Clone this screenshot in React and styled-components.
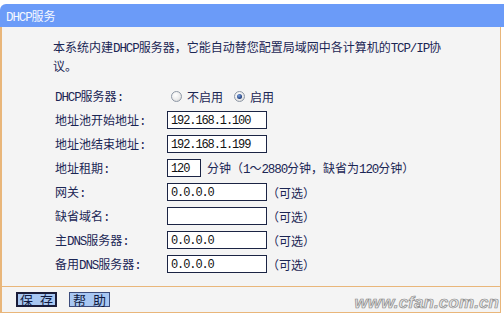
import React from "react";
import styled, { createGlobalStyle, css } from "styled-components";

const Global = createGlobalStyle`
  html, body { margin: 0; padding: 0; background: #ffffff; }
  body { font-family: "Noto Sans CJK SC", "Noto Sans", sans-serif; }
`;

const BORDER = "#e9b67a";
const TEXT = "#1b2654";
const CJK = `"Noto Sans CJK SC", "Noto Sans", sans-serif`;

const Page = styled.div`
  width: 504px;
  height: 314px;
  padding-top: 4px;
  box-sizing: border-box;
  overflow: hidden;
  background: #ffffff;
`;

const Header = styled.div`
  height: 23px;
  line-height: 23px;
  padding-left: 6px;
  background: #6b9bf8;
  border-top-left-radius: 6px;
  color: #f4f7ff;
  font-family: ${CJK};
  font-size: 12px;
`;

/* half-width Latin, as the bitmap Chinese system font draws it */
const Ascii = styled.span`
  font-family: "Liberation Mono", monospace;
  font-size: 12.5px;
  letter-spacing: -1.1px;
  line-height: 1;
`;

const Body = styled.div`
  width: 501px;
  box-sizing: border-box;
  border-left: 2px solid ${BORDER};
  border-right: 1px solid ${BORDER};
  background: #f4f4f4;
  padding: 10px 0 10px 51px;
  color: ${TEXT};
  font-family: ${CJK};
  font-size: 12px;
`;

const Intro = styled.p`
  margin: 0 0 9px 0;
  max-width: 393px;
  line-height: 19px;
`;

const Form = styled.div`
  display: flex;
  flex-direction: column;
  padding-left: 2px;
`;

const Row = styled.div`
  height: 24px;
  display: flex;
  align-items: center;
`;

const Label = styled.div`
  width: 112px;
  flex: none;
  white-space: nowrap;
`;

const Field = styled.input`
  box-sizing: border-box;
  width: ${(p) => p.$w || 100}px;
  height: 18px;
  margin: 0;
  padding: 1px 0 0 3px;
  border: 1px solid #1b2444;
  background: #ffffff;
  color: #111111;
  font-family: "Liberation Mono", monospace;
  font-size: 12px;
  letter-spacing: -1.1px;
  outline: none;
`;

const Note = styled.span`
  margin-left: ${(p) => p.$gap || 0}px;
  white-space: nowrap;
`;

const RadioGroup = styled.div`
  display: flex;
  align-items: center;
  padding-left: 4px;
`;

const RadioItem = styled.label`
  display: flex;
  align-items: center;
  gap: 5px;
  margin-right: 11px;
`;

const RadioDot = styled.span`
  position: relative;
  width: 9px;
  height: 9px;
  border-radius: 50%;
  border: 1px solid #8e98a6;
  background: radial-gradient(circle at 40% 35%, #ffffff 0, #ececec 55%, #c9c9c9 100%);
  ${(p) =>
    p.$checked &&
    css`
      &::after {
        content: "";
        position: absolute;
        left: 2px;
        top: 2px;
        width: 5px;
        height: 5px;
        border-radius: 50%;
        background: radial-gradient(circle at 40% 35%, #7aa2e0 0, #1f3b78 70%);
      }
    `}
`;

const Footer = styled.div`
  width: 501px;
  height: 27px;
  box-sizing: border-box;
  border-left: 2px solid ${BORDER};
  border-right: 1px solid ${BORDER};
  border-top: 1px solid ${BORDER};
  border-bottom: 1px solid ${BORDER};
  background: #f4f4f4;
  display: flex;
  align-items: flex-start;
  padding: 5px 0 0 14px;
  gap: 12px;
`;

const Button = styled.button`
  box-sizing: border-box;
  width: 41px;
  height: 15px;
  margin: 0;
  padding: 0 0 0 2px;
  background: #a8c7f2;
  border: ${(p) => (p.$primary ? "2px solid #1a1c38" : "1px solid #3c4c7c")};
  color: #101a40;
  font-family: ${CJK};
  font-size: 13px;
  line-height: 11px;
  letter-spacing: 2px;
  white-space: pre;
  display: flex;
  align-items: center;
  justify-content: center;
  cursor: pointer;
`;

const Watermark = styled.span`
  margin-left: auto;
  margin-right: 1px;
  font-family: "Liberation Sans", sans-serif;
  font-weight: bold;
  font-style: italic;
  font-size: 17px;
  line-height: 21px;
  color: #e6e6e6;
  -webkit-text-stroke: 0.7px #8a8a8a;
  letter-spacing: 0.1px;
`;

const rows = [
  { label: "地址池开始地址", value: "192.168.1.100" },
  { label: "地址池结束地址", value: "192.168.1.199" },
];

const optional = [
  { label: <>网关</>, key: "gw", value: "0.0.0.0" },
  { label: <>缺省域名</>, key: "dom", value: "" },
  { label: <>主<Ascii>DNS</Ascii>服务器</>, key: "dns1", value: "0.0.0.0" },
  { label: <>备用<Ascii>DNS</Ascii>服务器</>, key: "dns2", value: "0.0.0.0" },
];

export default function App() {
  return (
    <Page>
      <Global />
      <Header>
        <Ascii>DHCP</Ascii>服务
      </Header>
      <Body>
        <Intro>
          本系统内建<Ascii>DHCP</Ascii>服务器，它能自动替您配置局域网中各计算机的<Ascii>TCP/IP</Ascii>
          {"协"}
          {"议。"}
        </Intro>
        <Form>
          <Row>
            <Label>
              <Ascii>DHCP</Ascii>服务器<Ascii>:</Ascii>
            </Label>
            <RadioGroup>
              <RadioItem>
                <RadioDot />
                不启用
              </RadioItem>
              <RadioItem>
                <RadioDot $checked />
                启用
              </RadioItem>
            </RadioGroup>
          </Row>
          {rows.map((r) => (
            <Row key={r.label}>
              <Label>
                {r.label}
                <Ascii>:</Ascii>
              </Label>
              <Field defaultValue={r.value} />
            </Row>
          ))}
          <Row>
            <Label>
              地址租期<Ascii>:</Ascii>
            </Label>
            <Field $w={34} defaultValue="120" />
            <Note $gap={6}>
              分钟（<Ascii>1</Ascii>～<Ascii>2880</Ascii>分钟，缺省为<Ascii>120</Ascii>分钟）
            </Note>
          </Row>
          {optional.map((r) => (
            <Row key={r.key}>
              <Label>
                {r.label}
                <Ascii>:</Ascii>
              </Label>
              <Field defaultValue={r.value} />
              <Note>（可选）</Note>
            </Row>
          ))}
        </Form>
      </Body>
      <Footer>
        <Button $primary>保 存</Button>
        <Button>帮 助</Button>
        <Watermark>www.cfan.com.cn</Watermark>
      </Footer>
    </Page>
  );
}
